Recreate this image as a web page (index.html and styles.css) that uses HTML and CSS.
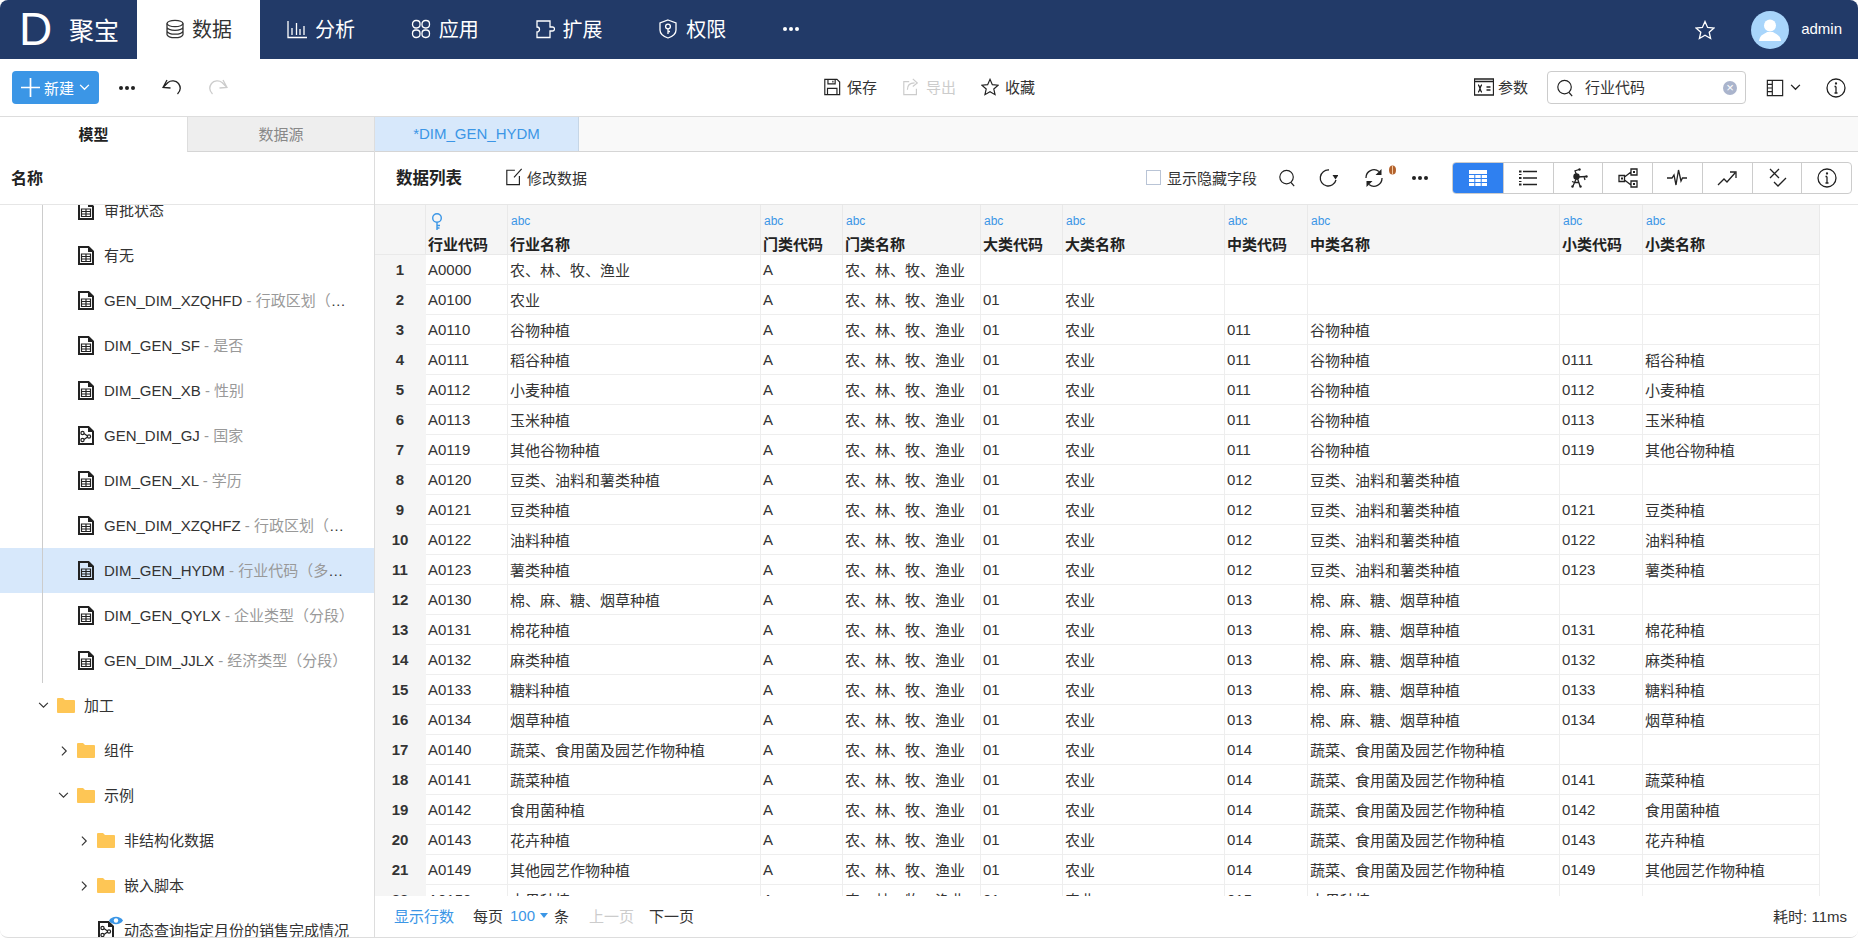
FILE: index.html
```html
<!DOCTYPE html>
<html lang="zh-CN">
<head>
    <meta charset="UTF-8">
    <title>聚宝</title>
    <link rel="stylesheet" href="styles.css">
</head>
<body>
    <svg class="sprite" xmlns="http://www.w3.org/2000/svg">
        <symbol id="i-db" viewBox="0 0 20 20"><ellipse cx="10" cy="4.500" rx="8" ry="3.200"/><path d="M2 4.500v11c0 1.800 3.600 3.200 8 3.200s8-1.400 8-3.200v-11M2 8.200c0 1.800 3.600 3.200 8 3.200s8-1.400 8-3.200M2 12c0 1.800 3.600 3.200 8 3.200s8-1.400 8-3.200"/></symbol>
        <symbol id="i-chart" viewBox="0 0 20 20"><path d="M1 2v16.500h19M5 9v7M9.500 4v12M13 10v6M17 7v9"/></symbol>
        <symbol id="i-apps" viewBox="0 0 20 20"><rect x="1.500" y="1.500" width="7.500" height="7.500" rx="3.400"/><rect x="11" y="1.500" width="7.500" height="7.500" rx="3.400"/><rect x="1.500" y="11" width="7.500" height="7.500" rx="3.400"/><rect x="11" y="11" width="7.500" height="7.500" rx="3.400"/></symbol>
        <symbol id="i-ext" viewBox="0 0 20 20"><path d="M2 2h13v6h2.500a2 2 0 0 1 0 4H15v6.500H2V13a2.500 2.500 0 0 0 0-5z"/></symbol>
        <symbol id="i-shield" viewBox="0 0 20 20"><path d="M10 1l8 3v7c0 4-3.500 6.500-8 8-4.500-1.500-8-4-8-8V4z"/><circle cx="10" cy="7.500" r="2.400"/><path d="M10 10v5M10 12.500h2"/></symbol>
        <symbol id="i-undo" viewBox="0 0 20 20"><path d="M5 2L1 9.500l7.500.5M1.500 9L6 4.500c3-2.500 8-2 10.500 1 2.500 3.500 2 7.500-1 10.500"/></symbol>
        <symbol id="i-redo" viewBox="0 0 20 20"><path d="M15 2l4 7.500-7.500.5M18.500 9L14 4.500c-3-2.500-8-2-10.500 1-2.500 3.500-2 7.500 1 10.500"/></symbol>
        <symbol id="i-save" viewBox="0 0 20 20"><path d="M2 1.500h13.500l3 3v14H2zM5.500 1.500v5h8v-5M5 18.500v-7h10.500v7M11 3v2"/></symbol>
        <symbol id="i-export" viewBox="0 0 20 20"><path d="M8 4H2v14.500h14V12M6 13c0-5 3-7.500 8-7.500M12 1l5 4.500-5 4"/></symbol>
        <symbol id="i-star" viewBox="0 0 20 20"><path d="M10 1.500l2.600 5.900 6.400.6-4.800 4.200 1.400 6.300-5.600-3.300-5.600 3.300 1.400-6.300L1 8l6.400-.6z"/></symbol>
        <symbol id="i-param" viewBox="0 0 20 20"><path d="M.5 2h19v16H.5zM.5 4.500h19M4 8c2 0 2 7 4 7M8 8c-2 0-2 7-4 7M12.500 10h4M12.500 13h4"/></symbol>
        <symbol id="i-search" viewBox="0 0 20 20"><circle cx="9.500" cy="9" r="7.500"/><path d="M14.500 15l3.500 4"/></symbol>
        <symbol id="i-layout" viewBox="0 0 20 20"><path d="M1.500 1.500h17v17h-17zM7 1.500v17M1.500 6h5.500M1.500 10h5.500M1.500 14h5.500"/></symbol>
        <symbol id="i-info" viewBox="0 0 20 20"><circle cx="10" cy="10" r="9"/><path d="M10 8.500V15M8.500 15h3M8.500 8.500H10"/><circle cx="10" cy="5.500" r=".5"/></symbol>
        <symbol id="i-edit" viewBox="0 0 20 20"><path d="M11 2.500H2v16h14V9M10 10.500L18.500 1"/></symbol>
        <symbol id="i-rotate" viewBox="0 0 20 20"><path d="M11 2a8 8 0 1 0 7 10"/><path class="solid" d="M14.500 7h6l-3 4.500z"/></symbol>
        <symbol id="i-refresh" viewBox="0 0 20 20"><path d="M2 10a8 8 0 0 1 13-6.500M18 10a8 8 0 0 1-13 6.500"/><path class="solid" d="M17.500 1v6h-6zM2.500 19v-6h6z"/></symbol>
        <symbol id="i-grid" viewBox="0 0 18 16"><path class="solid" d="M0 0h18v4H0zM0 5h5.300v3H0zM6.300 5h5.400v3H6.300zM12.700 5H18v3h-5.300zM0 9h5.300v3H0zM6.300 9h5.400v3H6.300zM12.700 9H18v3h-5.300zM0 13h5.300v3H0zM6.300 13h5.400v3H6.300zM12.700 13H18v3h-5.300z"/></symbol>
        <symbol id="i-list" viewBox="0 0 18 16"><path d="M4 1.500h14M4 8h14M4 14.500h14"/><path class="solid" d="M0 .5h2.500v2H0zM0 4h2.500v1H0zM0 7h2.500v2H0zM0 11h2.500v1H0zM0 13.500h2.500v2H0z"/></symbol>
        <symbol id="i-graph" viewBox="0 0 20 20"><path d="M9 8L7 3l4-1.500M9 9l9-.5M16 8.500l1 3.500M9 9l-4 9M9 9l3 9M4 13.500l3 1 4 0"/><circle class="solid" cx="8.500" cy="8.500" r="3.200"/><circle class="solid" cx="11.500" cy="1.500" r="1.200"/><circle class="solid" cx="18.500" cy="8.500" r="1.200"/><circle class="solid" cx="4.500" cy="18.500" r="1.200"/><circle class="solid" cx="12.500" cy="18.500" r="1.200"/></symbol>
        <symbol id="i-flow" viewBox="0 0 20 20"><path d="M1 7.500h5.500v6H1zM13 1h6v6h-6zM13 13h6v6h-6zM6.500 9L13 4M6.500 12l6.500 5"/><path class="solid" d="M3 9.500h2v2H3zM15 3h2v2h-2zM15 15h2v2h-2z"/></symbol>
        <symbol id="i-pulse" viewBox="0 0 20 20"><path d="M0 10h5l2-3 2 10 2.500-15 2.500 11 1.500-3H20"/></symbol>
        <symbol id="i-trend" viewBox="0 0 20 20"><path d="M1 17l6-6 3 3 8-9M13 4h6v6"/></symbol>
        <symbol id="i-check" viewBox="0 0 20 20"><path d="M3 1l9 9M12 1l-9 9M7 14l4 4 8-8"/></symbol>
        <symbol id="i-doc" viewBox="0 0 16 19"><path class="thick" d="M1 1h9.500L15 5.500V18H1z"/><path class="solid" d="M10 0l6 6h-6z"/><path d="M3.500 8h9v7.500h-9zM3.500 10.500h9M3.500 13h9M8 8v7.500"/></symbol>
        <symbol id="i-model" viewBox="0 0 16 19"><path class="thick" d="M1 1h9.500L15 5.500V18H1z"/><path class="solid" d="M10 0l6 6h-6z"/><circle cx="4.500" cy="7" r="1.600"/><circle cx="4.500" cy="14" r="1.600"/><circle cx="11" cy="10.500" r="1.600"/><path d="M6 7.500l3.500 2.500M6 13.500l3.500-2.500"/></symbol>
        <symbol id="i-key" viewBox="0 0 12 18"><circle cx="6" cy="5" r="4.300"/><path d="M6 9.500V17M6 12.500h3M6 15h2.500"/></symbol>
    </svg>

    <div class="app">
        <header class="topbar">
            <div class="brand"><span class="brand-d">D</span><span class="brand-name">聚宝</span></div>
            <nav class="nav">
                <a class="nav-item active"><svg class="icon ic20"><use href="#i-db"/></svg>数据</a>
                <a class="nav-item"><svg class="icon ic20"><use href="#i-chart"/></svg>分析</a>
                <a class="nav-item"><svg class="icon ic20"><use href="#i-apps"/></svg>应用</a>
                <a class="nav-item"><svg class="icon ic20"><use href="#i-ext"/></svg>扩展</a>
                <a class="nav-item"><svg class="icon ic20"><use href="#i-shield"/></svg>权限</a>
                <a class="nav-item nav-more"><i class="dots"><b></b><b></b><b></b></i></a>
            </nav>
            <div class="user">
                <svg class="icon ic20 user-star"><use href="#i-star"/></svg>
                <span class="avatar">
                    <svg viewBox="0 0 38 38" width="38" height="38"><circle cx="19" cy="14.500" r="6" fill="#fff"/><path d="M8 30c1-7 6-7 8-9h6c2 2 7 2 8 9z" fill="#fff"/></svg>
                </span>
                <span class="user-name">admin</span>
            </div>
        </header>

        <div class="toolbar">
            <div class="tb-left">
                <button class="btn-new"><svg class="icon plus" viewBox="0 0 20 20"><path d="M10 0v20M0 10h20"/></svg>新建<svg class="icon chev" viewBox="0 0 12 8"><path d="M1 1l5 5 5-5"/></svg></button>
                <i class="dots tb-dots"><b></b><b></b><b></b></i>
                <svg class="icon ic20 tb-undo"><use href="#i-undo"/></svg>
                <svg class="icon ic20 tb-redo"><use href="#i-redo"/></svg>
            </div>
            <div class="tb-center">
                <a class="tool"><svg class="icon ic18"><use href="#i-save"/></svg>保存</a>
                <a class="tool disabled"><svg class="icon ic18"><use href="#i-export"/></svg>导出</a>
                <a class="tool"><svg class="icon ic18"><use href="#i-star"/></svg>收藏</a>
            </div>
            <div class="tb-right">
                <a class="tool params"><svg class="icon ic20"><use href="#i-param"/></svg>参数</a>
                <div class="search">
                    <svg class="icon ic18"><use href="#i-search"/></svg>
                    <span class="search-text">行业代码</span>
                    <span class="search-clear">×</span>
                </div>
                <a class="tb-layout"><svg class="icon ic18"><use href="#i-layout"/></svg><svg class="icon chev dark" viewBox="0 0 12 8"><path d="M1 1l5 5 5-5"/></svg></a>
                <svg class="icon ic20"><use href="#i-info"/></svg>
            </div>
        </div>

        <div class="main">
            <aside class="side">
                <div class="side-tabs">
                    <div class="side-tab active">模型</div>
                    <div class="side-tab">数据源</div>
                </div>
                <div class="side-title">名称</div>
                <div class="tree-wrap"><div class="tree" id="tree"></div></div>
            </aside>

            <section class="content">
                <div class="doc-tabs"><div class="doc-tab">*DIM_GEN_HYDM</div></div>
                <div class="grid-tools">
                    <span class="grid-title">数据列表</span>
                    <a class="tool edit"><svg class="icon ic18"><use href="#i-edit"/></svg>修改数据</a>
                    <div class="grid-actions">
                        <label class="hidden-check"><span class="checkbox"></span>显示隐藏字段</label>
                        <svg class="icon ic18 act-search"><use href="#i-search"/></svg>
                        <svg class="icon ic20 act-rotate"><use href="#i-rotate"/></svg>
                        <span class="refresh">
                            <svg class="icon ic20"><use href="#i-refresh"/></svg>
                            <svg class="bean" viewBox="0 0 9 10"><ellipse cx="4.500" cy="5" rx="3.500" ry="4.500" fill="#b3622c"/><path d="M4.500 1v8" stroke="#f3c9a0"/></svg>
                        </span>
                        <i class="dots act-dots"><b></b><b></b><b></b></i>
                        <div class="views">
                            <a class="view active"><svg class="icon ic-v"><use href="#i-grid"/></svg></a>
                            <a class="view"><svg class="icon ic-v"><use href="#i-list"/></svg></a>
                            <a class="view"><svg class="icon ic20"><use href="#i-graph"/></svg></a>
                            <a class="view"><svg class="icon ic20"><use href="#i-flow"/></svg></a>
                            <a class="view"><svg class="icon ic20"><use href="#i-pulse"/></svg></a>
                            <a class="view"><svg class="icon ic20"><use href="#i-trend"/></svg></a>
                            <a class="view"><svg class="icon ic20"><use href="#i-check"/></svg></a>
                            <a class="view"><svg class="icon ic20"><use href="#i-info"/></svg></a>
                        </div>
                    </div>
                </div>
                <div class="table-wrap"><table class="data" id="data"></table></div>
                <div class="pager">
                    <a class="link">显示行数</a>
                    <span class="per">每页</span>
                    <a class="link size">100<i class="caret"></i></a>
                    <span class="unit">条</span>
                    <span class="prev">上一页</span>
                    <span class="next">下一页</span>
                    <span class="cost">耗时: 11ms</span>
                </div>
            </section>
        </div>
    </div>

    <script>
    var chevDown = '<svg class="icon tw" viewBox="0 0 12 8"><path d="M1 1l5 5 5-5"/></svg>';
    var chevRight = '<svg class="icon tw right" viewBox="0 0 8 12"><path d="M1 1l5 5-5 5"/></svg>';
    var folder = '<svg class="folder" viewBox="0 0 18 15"><path d="M0 1a1 1 0 0 1 1-1h5l2 2h9a1 1 0 0 1 1 1v11a1 1 0 0 1-1 1H1a1 1 0 0 1-1-1z"/></svg>';

    var tables = [
        ['审批状态', ''],
        ['有无', ''],
        ['GEN_DIM_XZQHFD', '行政区划（省市县）'],
        ['DIM_GEN_SF', '是否'],
        ['DIM_GEN_XB', '性别'],
        ['GEN_DIM_GJ', '国家', 'model'],
        ['DIM_GEN_XL', '学历'],
        ['GEN_DIM_XZQHFZ', '行政区划（省市县）'],
        ['DIM_GEN_HYDM', '行业代码（多级分类）', 'doc', true],
        ['DIM_GEN_QYLX', '企业类型（分段）'],
        ['GEN_DIM_JJLX', '经济类型（分段）']
    ];

    function displayTree() {
        var output = '<div class="tree-group">';
        for(var i = 0; i < tables.length; i++) {
            var t = tables[i];
            output += '<div class="node lv2' + (t[3] ? ' selected' : '') + '"><span class="tw-slot"></span>';
            output += '<svg class="icon doc"><use href="#i-' + (t[2] || 'doc') + '"/></svg>';
            output += '<span class="label">' + t[0];
            if(t[1]) {
                output += ' <span class="desc">- ' + t[1] + '</span>';
            }
            output += '</span></div>';
        }
        output += '</div>';
        output += '<div class="node lv1"><span class="tw-slot">' + chevDown + '</span>' + folder + '<span class="label">加工</span></div>';
        output += '<div class="node lv2"><span class="tw-slot">' + chevRight + '</span>' + folder + '<span class="label">组件</span></div>';
        output += '<div class="node lv2"><span class="tw-slot">' + chevDown + '</span>' + folder + '<span class="label">示例</span></div>';
        output += '<div class="node lv3"><span class="tw-slot">' + chevRight + '</span>' + folder + '<span class="label">非结构化数据</span></div>';
        output += '<div class="node lv3"><span class="tw-slot">' + chevRight + '</span>' + folder + '<span class="label">嵌入脚本</span></div>';
        output += '<div class="node lv3"><span class="tw-slot"></span><span class="query"><svg class="icon doc"><use href="#i-model"/></svg>';
        output += '<svg class="eye" viewBox="0 0 14 9"><path d="M0 4.500C3-.5 11-.5 14 4.500 11 9.500 3 9.500 0 4.500z" fill="#3b96e6"/><circle cx="7" cy="4.500" r="2.200" fill="#fff"/></svg></span>';
        output += '<span class="label">动态查询指定月份的销售完成情况</span></div>';
        document.getElementById('tree').innerHTML = output;
    }

    var menlei = '农、林、牧、渔业';
    var columns = ['行业代码', '行业名称', '门类代码', '门类名称', '大类代码', '大类名称', '中类代码', '中类名称', '小类代码', '小类名称'];
    var widths = [51, 82, 253, 82, 138, 82, 162, 83, 252, 83, 177];

    // code, name, middle class code, middle class name, big class flag, small class flag
    var rows = [
        ['A0000', menlei, '', '', false, false],
        ['A0100', '农业', '', '', true, false],
        ['A0110', '谷物种植', '011', '谷物种植', true, false],
        ['A0111', '稻谷种植', '011', '谷物种植', true, true],
        ['A0112', '小麦种植', '011', '谷物种植', true, true],
        ['A0113', '玉米种植', '011', '谷物种植', true, true],
        ['A0119', '其他谷物种植', '011', '谷物种植', true, true],
        ['A0120', '豆类、油料和薯类种植', '012', '豆类、油料和薯类种植', true, false],
        ['A0121', '豆类种植', '012', '豆类、油料和薯类种植', true, true],
        ['A0122', '油料种植', '012', '豆类、油料和薯类种植', true, true],
        ['A0123', '薯类种植', '012', '豆类、油料和薯类种植', true, true],
        ['A0130', '棉、麻、糖、烟草种植', '013', '棉、麻、糖、烟草种植', true, false],
        ['A0131', '棉花种植', '013', '棉、麻、糖、烟草种植', true, true],
        ['A0132', '麻类种植', '013', '棉、麻、糖、烟草种植', true, true],
        ['A0133', '糖料种植', '013', '棉、麻、糖、烟草种植', true, true],
        ['A0134', '烟草种植', '013', '棉、麻、糖、烟草种植', true, true],
        ['A0140', '蔬菜、食用菌及园艺作物种植', '014', '蔬菜、食用菌及园艺作物种植', true, false],
        ['A0141', '蔬菜种植', '014', '蔬菜、食用菌及园艺作物种植', true, true],
        ['A0142', '食用菌种植', '014', '蔬菜、食用菌及园艺作物种植', true, true],
        ['A0143', '花卉种植', '014', '蔬菜、食用菌及园艺作物种植', true, true],
        ['A0149', '其他园艺作物种植', '014', '蔬菜、食用菌及园艺作物种植', true, true],
        ['A0150', '水果种植', '015', '水果种植', true, false]
    ];

    function displayTable() {
        var output = '<colgroup>';
        for(var w = 0; w < widths.length; w++) {
            output += '<col style="width:' + widths[w] + 'px">';
        }
        output += '</colgroup><thead><tr><th class="num"></th>';
        for(var c = 0; c < columns.length; c++) {
            var type = c == 0 ? '<svg class="icon key"><use href="#i-key"/></svg>' : 'abc';
            output += '<th><div class="type">' + type + '</div><div class="name">' + columns[c] + '</div></th>';
        }
        output += '</tr></thead><tbody>';
        for(var i = 0; i < rows.length; i++) {
            var r = rows[i];
            var cells = [r[0], r[1], 'A', menlei,
                r[4] ? '01' : '', r[4] ? '农业' : '',
                r[2], r[3],
                r[5] ? r[0].substring(1) : '', r[5] ? r[1] : ''];
            output += '<tr><td class="num">' + (i + 1) + '</td>';
            for(var j = 0; j < cells.length; j++) {
                output += '<td>' + cells[j] + '</td>';
            }
            output += '</tr>';
        }
        output += '</tbody>';
        document.getElementById('data').innerHTML = output;
    }

    displayTree();
    displayTable();
    </script>
</body>
</html>
```

FILE: styles.css
```css
* {
    box-sizing: border-box;
}
html, body {
    margin: 0;
    height: 100%;
    background: #fff;
}
body {
    font-family: "Liberation Sans", "Noto Sans CJK SC", sans-serif;
    font-size: 15px;
    color: #333;
    overflow: hidden;
}
.sprite {
    display: none;
}
.icon {
    display: block;
    flex: none;
    fill: none;
    stroke: currentColor;
    stroke-width: 1.3;
    overflow: visible;
}
.icon .solid, .solid {
    fill: currentColor;
    stroke: none;
}
.thick {
    stroke-width: 2;
}
.ic18 {
    width: 18px;
    height: 18px;
}
.ic20 {
    width: 20px;
    height: 20px;
}

.app {
    height: 938px;
    display: flex;
    flex-direction: column;
    border-radius: 8px;
    border-bottom: 1px solid #ddd;
    overflow: hidden;
}

/* top bar */
.topbar {
    height: 59px;
    flex: none;
    display: flex;
    background: #223a68;
    color: #fff;
}
.brand {
    width: 137px;
    display: flex;
    align-items: center;
    padding-left: 19px;
}
.brand-d {
    font-size: 46px;
    line-height: 59px;
    width: 50px;
}
.brand-name {
    font-size: 25px;
    padding-bottom: 2px;
}
.nav {
    display: flex;
}
.nav-item {
    width: 123.75px;
    padding: 0 0 2px 27px;
    display: flex;
    align-items: center;
    gap: 8px;
    font-size: 20px;
}
.nav-item.active {
    background: #fff;
    color: #333;
    width: 123px;
    padding-left: 28px;
    gap: 7px;
}
.nav-more {
    width: auto;
    padding-left: 28px;
}
.dots {
    display: flex;
    gap: 2px;
}
.dots b {
    width: 4px;
    height: 4px;
    border-radius: 50%;
    background: currentColor;
}
.user {
    margin-left: auto;
    display: flex;
    align-items: center;
    padding-right: 16px;
}
.user-star {
    margin-right: 36px;
}
.avatar {
    width: 38px;
    height: 38px;
    border-radius: 50%;
    background: #a8d5fb;
    overflow: hidden;
}
.avatar svg {
    display: block;
}
.user-name {
    margin-left: 12px;
    padding-bottom: 2px;
}

/* main toolbar */
.toolbar {
    height: 58px;
    flex: none;
    display: flex;
    align-items: center;
    border-bottom: 1px solid #ddd;
}
.tb-left {
    width: 823px;
    padding-left: 12px;
    display: flex;
    align-items: center;
}
.btn-new {
    width: 87px;
    height: 33px;
    padding: 0 0 1px 9px;
    display: flex;
    align-items: center;
    background: #3b96e6;
    color: #fff;
    border: 0;
    border-radius: 4px;
    font: inherit;
}
.plus {
    width: 19px;
    height: 19px;
    margin-right: 4px;
    stroke-width: 1.8;
}
.chev {
    width: 11px;
    height: 7px;
    margin-left: 5px;
    stroke-width: 1.5;
}
.tb-dots {
    margin-left: 20px;
    color: #222;
}
.tb-undo {
    margin-left: 27px;
    color: #222;
}
.tb-redo {
    margin-left: 26px;
    color: #ccc;
}
.tb-center {
    display: flex;
    align-items: center;
    gap: 25px;
}
.tool {
    padding-bottom: 2px;
    display: flex;
    align-items: center;
    gap: 6px;
}
.tool .icon {
    color: #222;
}
.tool.disabled, .tool.disabled .icon {
    color: #ccc;
}
.params {
    gap: 4px;
}
.tb-right {
    margin-left: auto;
    padding-right: 12px;
    display: flex;
    align-items: center;
}
.search {
    width: 199px;
    height: 33px;
    margin-left: 19px;
    padding: 0 8px 0 8px;
    display: flex;
    align-items: center;
    border: 1px solid #ccc;
    border-radius: 4px;
}
.search .icon {
    color: #222;
}
.search-text {
    margin-left: 11px;
    padding-bottom: 2px;
}
.search-clear {
    margin-left: auto;
    width: 14px;
    height: 14px;
    border-radius: 50%;
    background: #aab4cc;
    color: #fff;
    font-size: 13px;
    line-height: 14px;
    text-align: center;
}
.tb-layout {
    margin-left: 20px;
    margin-right: 25px;
    display: flex;
    align-items: center;
    color: #222;
}
.tb-layout .chev {
    margin-left: 6px;
}
.tb-right > .icon {
    color: #222;
}

/* left panel */
.main {
    flex: 1;
    min-height: 0;
    display: flex;
}
.side {
    width: 375px;
    flex: none;
    display: flex;
    flex-direction: column;
    border-right: 1px solid #ddd;
}
.side-tabs {
    height: 35px;
    flex: none;
    display: flex;
}
.side-tab {
    width: 187px;
    padding-bottom: 2px;
    display: flex;
    align-items: center;
    justify-content: center;
    background: #eee;
    color: #888;
    border-left: 1px solid #ddd;
    border-bottom: 1px solid #d5d5d5;
}
.side-tab.active {
    background: #fff;
    color: #222;
    font-weight: bold;
    border: 0;
}
.side-title {
    height: 53px;
    flex: none;
    padding: 0 0 2px 11px;
    display: flex;
    align-items: center;
    font-size: 16px;
    font-weight: bold;
    color: #222;
    border-bottom: 1px solid #e6e6e6;
}
.tree-wrap {
    flex: 1;
    min-height: 0;
    overflow: hidden;
}
.tree {
    margin-top: -17px;
}
.tree-group {
    position: relative;
}
.tree-group::before {
    content: "";
    position: absolute;
    left: 42px;
    top: 0;
    bottom: 0;
    width: 1px;
    background: #ccc;
    z-index: 1;
}
.node {
    height: 45px;
    display: flex;
    align-items: center;
    white-space: nowrap;
}
.node.selected {
    background: #d7e8fb;
}
.lv1 {
    padding-left: 35px;
}
.lv2 {
    padding-left: 55px;
}
.lv3 {
    padding-left: 75px;
}
.tw-slot {
    width: 22px;
    flex: none;
    display: flex;
    align-items: center;
    justify-content: flex-start;
}
.tw {
    width: 11px;
    height: 7px;
    margin-left: 3px;
    color: #333;
    stroke-width: 1.3;
}
.tw.right {
    width: 7px;
    height: 12px;
    margin-left: 6px;
}
.folder {
    width: 18px;
    height: 15px;
    flex: none;
    margin-right: 9px;
    fill: #fec655;
}
.doc {
    width: 16px;
    height: 19px;
    margin: 0 10px 0 1px;
    color: #222;
    stroke-width: 1.2;
}
.label {
    overflow: hidden;
    text-overflow: ellipsis;
    padding: 0 18px 2px 0;
}
.desc {
    color: #999;
}
.query {
    position: relative;
    flex: none;
}
.eye {
    position: absolute;
    left: 12px;
    top: -5px;
    width: 14px;
    height: 9px;
}

/* right panel */
.content {
    flex: 1;
    min-width: 0;
    display: flex;
    flex-direction: column;
}
.doc-tabs {
    height: 35px;
    flex: none;
    background: #f9f9f9;
    border-bottom: 1px solid #d5d5d5;
}
.doc-tab {
    width: 204px;
    height: 34px;
    padding-bottom: 2px;
    display: flex;
    align-items: center;
    justify-content: center;
    background: #d7e8fb;
    color: #3b96e6;
    border-right: 1px solid #c6d6e6;
}
.grid-tools {
    height: 53px;
    flex: none;
    padding: 0 6px 0 21px;
    display: flex;
    align-items: center;
    border-bottom: 1px solid #e6e6e6;
}
.grid-title {
    padding-bottom: 2px;
    font-size: 16.500px;
    font-weight: bold;
    color: #222;
}
.edit {
    margin-left: 43px;
}
.edit.tool {
    gap: 4px;
}
.grid-actions {
    margin-left: auto;
    display: flex;
    align-items: center;
}
.hidden-check {
    padding-bottom: 1px;
    display: flex;
    align-items: center;
    gap: 6px;
}
.checkbox {
    width: 15px;
    height: 15px;
    border: 1px solid #b9c4d6;
}
.act-search {
    color: #222;
    margin-left: 21px;
}
.act-rotate {
    color: #222;
    margin-left: 22px;
}
.refresh {
    position: relative;
    margin-left: 26px;
    color: #222;
}
.bean {
    position: absolute;
    left: 24px;
    top: -3px;
    width: 9px;
    height: 10px;
}
.act-dots {
    margin-left: 28px;
    color: #222;
}
.views {
    margin-left: 24px;
    display: flex;
    height: 32px;
    border: 1px solid #ccc;
    border-radius: 4px;
    overflow: hidden;
}
.view {
    width: 49.750px;
    display: flex;
    align-items: center;
    justify-content: center;
    border-left: 1px solid #ccc;
    color: #222;
}
.view:first-child {
    border-left: 0;
}
.view.active {
    background: #2f80f0;
    color: #fff;
}
.ic-v {
    width: 18px;
    height: 16px;
}

/* table */
.table-wrap {
    flex: 1;
    min-height: 0;
    overflow: hidden;
}
.data {
    table-layout: fixed;
    width: 1445px;
    border-collapse: separate;
    border-spacing: 0;
}
.data th {
    height: 50px;
    padding: 8px 0 0 2px;
    background: #f5f5f5;
    text-align: left;
    vertical-align: top;
    border-right: 1px solid #e9e9e9;
    border-bottom: 1px solid #e9e9e9;
    white-space: nowrap;
}
.data td {
    height: 30px;
    padding: 0 0 1px 2px;
    border-right: 1px solid #eee;
    border-bottom: 1px solid #eee;
    white-space: nowrap;
    overflow: hidden;
}
.data td.num {
    padding: 0 0 1px;
    background: #f5f5f5;
    text-align: center;
    font-weight: bold;
    border-color: #f5f5f5;
}
.data th.num {
    border-right-color: #e9e9e9;
}
.type {
    height: 16px;
    margin-left: 1px;
    font-size: 12px;
    line-height: 16px;
    font-weight: normal;
    color: #3b96e6;
}
.key {
    width: 12px;
    height: 18px;
    margin: 0 0 0 2px;
    stroke-width: 1.4;
}
.name {
    margin-top: 8px;
    line-height: 16px;
    font-weight: bold;
    color: #222;
}

/* pager */
.pager {
    height: 41px;
    flex: none;
    padding: 0 11px 2px 19px;
    display: flex;
    align-items: center;
    background: #fff;
}
.link {
    color: #3b96e6;
}
.per {
    margin-left: 19px;
}
.size {
    margin-left: 7px;
    display: flex;
    align-items: center;
}
.caret {
    margin-left: 5px;
    border: 4px solid transparent;
    border-top: 5px solid #3b96e6;
    border-bottom: 0;
}
.unit {
    margin-left: 6px;
}
.prev {
    margin-left: 20px;
    color: #ccc;
}
.next {
    margin-left: 15px;
}
.cost {
    margin-left: auto;
}
```
